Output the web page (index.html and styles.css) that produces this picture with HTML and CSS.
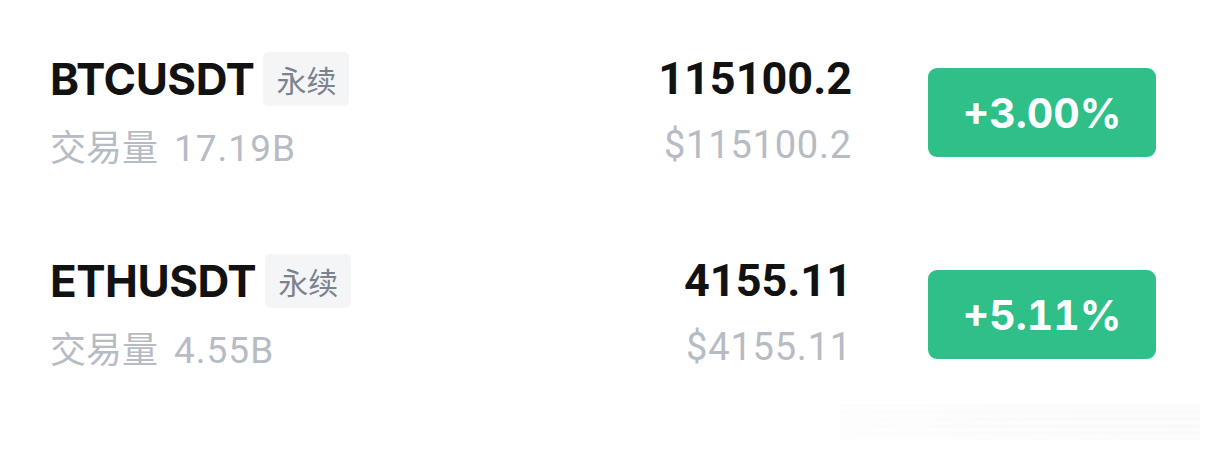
FILE: index.html
```html
<!DOCTYPE html>
<html lang="zh">
<head>
<meta charset="utf-8">
<link rel="stylesheet" href="styles.css">
</head>
<body>
<div class="list">
  <div class="row">
    <div class="left">
      <div class="title">
        <span class="name">BTCUSDT</span>
        <span class="tag">永续</span>
      </div>
      <div class="sub">交易量<span class="num">17.19B</span></div>
    </div>
    <div class="price">
      <div class="last">115100.2</div>
      <div class="usd">$115100.2</div>
    </div>
    <div class="change">+3.00%</div>
  </div>
  <div class="row">
    <div class="left">
      <div class="title">
        <span class="name">ETHUSDT</span>
        <span class="tag">永续</span>
      </div>
      <div class="sub">交易量<span class="num">4.55B</span></div>
    </div>
    <div class="price">
      <div class="last">4155.11</div>
      <div class="usd">$4155.11</div>
    </div>
    <div class="change">+5.11%</div>
  </div>
</div>
<div class="mark"></div>
</body>
</html>
```
FILE: styles.css
```css
html, body {
  margin: 0;
  background: #ffffff;
}
body {
  font-family: "Inter", "Noto Sans CJK SC", sans-serif;
  width: 1206px;
  height: 451px;
  overflow: hidden;
  position: relative;
}
.list {
  padding: 52px 50px 0 50px;
  display: flex;
  flex-direction: column;
  gap: 84px;
}
.row {
  display: flex;
  align-items: flex-start;
  height: 118px;
}
.left {
  flex: 1;
  display: flex;
  flex-direction: column;
}
.title {
  display: flex;
  align-items: center;
  height: 54px;
  gap: 9px;
}
.name {
  font-size: 44px;
  font-weight: 700;
  color: #121212;
  line-height: 54px;
  letter-spacing: -0.5px;
}
.tag {
  height: 54px;
  padding: 0 13px;
  display: flex;
  align-items: center;
  background: #f4f5f7;
  border-radius: 5px;
  font-family: "Noto Sans CJK SC", sans-serif;
  font-size: 30px;
  color: #7c828e;
}
.sub {
  margin-top: 17px;
  font-family: "Noto Sans CJK SC", sans-serif;
  font-size: 36px;
  line-height: 44px;
  color: #b7bbc4;
  white-space: nowrap;
}
.num {
  margin-left: 16px;
  font-family: "Roboto", sans-serif;
  font-size: 37px;
  letter-spacing: 1px;
}
.price {
  display: flex;
  flex-direction: column;
  align-items: flex-end;
  font-family: "Roboto", sans-serif;
}
.last {
  font-size: 45px;
  font-weight: 700;
  line-height: 54px;
  color: #121212;
}
.usd {
  margin-top: 17px;
  font-size: 38px;
  line-height: 44px;
  letter-spacing: 0.8px;
  color: #b7bbc4;
}
.change {
  margin-left: 76px;
  margin-top: 16px;
  width: 228px;
  height: 89px;
  border-radius: 9px;
  background: #2fbf88;
  color: #ffffff;
  font-family: "Inter", sans-serif;
  font-weight: 700;
  font-size: 41px;
  font-variant-numeric: tabular-nums;
  display: flex;
  align-items: center;
  justify-content: center;
}
.mark {
  position: absolute;
  left: 840px;
  top: 404px;
  width: 360px;
  height: 36px;
  opacity: 0.5;
  filter: blur(1.5px);
  background:
    repeating-linear-gradient(180deg, #ececec 0 2px, #fafafa 2px 7px),
    #f6f6f6;
  -webkit-mask-image: linear-gradient(90deg, rgba(0,0,0,0.4), rgba(0,0,0,1));
  mask-image: linear-gradient(90deg, rgba(0,0,0,0.4), rgba(0,0,0,1));
}
```
